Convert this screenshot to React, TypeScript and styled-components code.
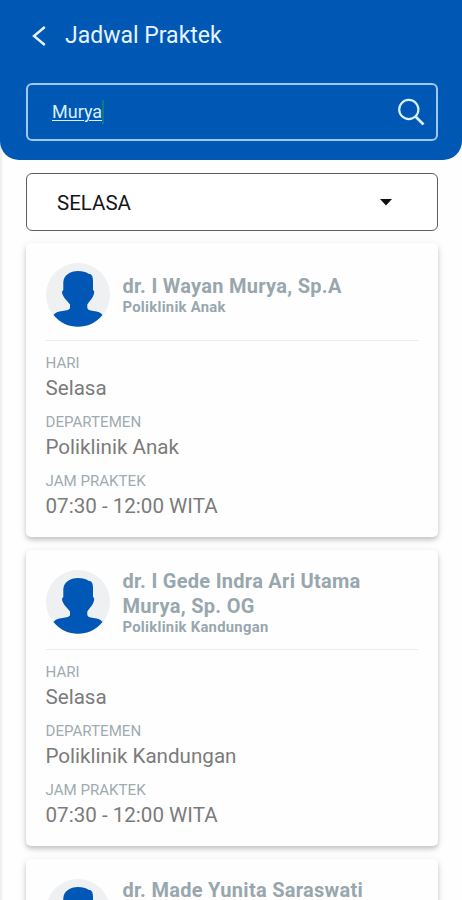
import React from 'react';
import styled, { createGlobalStyle } from 'styled-components';

const GlobalStyle = createGlobalStyle`
  * { box-sizing: border-box; }
  body {
    margin: 0;
    background: #fefefe;
    font-family: Roboto, "Liberation Sans", sans-serif;
  }
`;

const Screen = styled.div`
  width: 100%;
  height: 900px;
  overflow: hidden;
  background: linear-gradient(to right, #ececec 0, #f3f3f3 2px, #fefefe 3px);
`;

const Header = styled.header`
  height: 160px;
  padding: 0 24px 0 26px;
  background: #0058b4;
  border-radius: 0 0 19px 19px;
`;

const TitleBar = styled.div`
  display: flex;
  align-items: center;
  gap: 18px;
  height: 83px;
  padding: 0 0 12px 6px;
`;

const Title = styled.h1`
  margin: 0;
  color: #e6f4ff;
  font-size: 23px;
  font-weight: 400;
  line-height: 28px;
`;

const SearchBox = styled.div`
  display: flex;
  align-items: center;
  justify-content: space-between;
  height: 58px;
  padding: 0 11px 0 24px;
  border: 2px solid #9ccaf0;
  border-radius: 6px;
`;

const Query = styled.span`
  display: flex;
  align-items: center;
  color: #d8efff;
  font-size: 18px;
  line-height: 24px;
  text-decoration: underline;
  text-decoration-thickness: 1px;
  text-underline-offset: 2px;
`;

const Caret = styled.i`
  width: 2px;
  height: 24px;
  background: #087c83;
`;

const DaySelect = styled.div`
  display: flex;
  align-items: center;
  justify-content: space-between;
  height: 58px;
  margin: 13px 24px 12px 26px;
  padding: 1px 45px 0 30px;
  border: 1.5px solid #5d5d5d;
  border-radius: 6px;
  background: #fff;
  color: #161616;
  font-size: 20.5px;
`;

const List = styled.main`
  display: flex;
  flex-direction: column;
  gap: 13px;
  padding: 0 24px 0 26px;
`;

const Card = styled.article`
  padding: 20px 20px 0 19.5px;
  background: #fefefe;
  border-radius: 5px;
  box-shadow: 0 3px 4px rgba(0, 0, 0, 0.16), 0 2px 9px rgba(0, 0, 0, 0.1);
`;

const Doctor = styled.div`
  display: flex;
  gap: 13px;
  padding-bottom: 13px;
  border-bottom: 1px solid #ebebeb;
`;

const DoctorText = styled.div`
  display: flex;
  flex-direction: column;
  justify-content: center;
  margin-top: -1px;
  padding-bottom: 1px;
`;

const Name = styled.h2`
  margin: 0;
  color: #98a7ad;
  font-size: 20px;
  font-weight: 700;
  letter-spacing: 0.28px;
  line-height: 25px;
  white-space: pre-line;
`;

const Clinic = styled.div`
  color: #98a7ad;
  font-size: 14.8px;
  font-weight: 700;
  letter-spacing: 0.28px;
  line-height: 16px;
`;

const Details = styled.dl`
  margin: 0;
  padding: 13px 0 6px;
`;

const Detail = styled.div`
  height: 59px;
`;

const Label = styled.dt`
  color: #9eabaf;
  font-size: 15.1px;
  line-height: 18px;
`;

const Value = styled.dd`
  margin: 0;
  color: #7b7b7b;
  font-size: 20.6px;
  line-height: 32px;
`;

const AvatarSvg = styled.svg`
  display: block;
  flex: none;
`;

const Avatar = () => (
  <AvatarSvg width="64" height="64" viewBox="0 0 64 64">
    <circle cx="32" cy="32" r="32" fill="#eff0f1" />
    <path
      fill="#0057b5"
      d="M32 8C36.500 8 40 9 42.500 10.800C46 11 47 13.500 47 18V27C48.600 27.500 48.400 30 47.600 32C46.500 35.500 43.500 38 41.300 41.500V44.700C41.500 46.800 43.500 47.500 47.500 48C52 48.500 55 49.800 56.500 52C50 60 41 63.800 32 63.800S14 60 7.500 52C9 49.800 12 48.500 16.500 48C20.500 47.500 24 46.800 24 44.700V41.500C21.500 38 18 35.500 16.800 32C15.800 30 15.600 28 17.300 27V19C18 12 24 8 32 8Z"
    />
  </AvatarSvg>
);

const BackIcon = () => (
  <svg width="15" height="22" viewBox="0 0 15 22" fill="none" stroke="#e6f4ff" strokeWidth="2.4">
    <path d="M12.800 2L2 11L12.800 20" />
  </svg>
);

const SearchIcon = () => (
  <svg width="28" height="28" viewBox="0 0 28 28" fill="none" stroke="#d8efff" strokeWidth="2.200">
    <circle cx="11.800" cy="11.500" r="9.600" />
    <path d="M18.500 18.500L26.500 26.500" strokeWidth="2.700" />
  </svg>
);

const doctors = [
  { name: 'dr. I Wayan Murya, Sp.A', clinic: 'Poliklinik Anak' },
  { name: 'dr. I Gede Indra Ari Utama\nMurya, Sp. OG', clinic: 'Poliklinik Kandungan' },
  { name: 'dr. Made Yunita Saraswati\nMurya, Sp. OG', clinic: 'Poliklinik Kandungan' },
];

export default function App() {
  return (
    <>
      <GlobalStyle />
      <Screen>
        <Header>
          <TitleBar>
            <BackIcon />
            <Title>Jadwal Praktek</Title>
          </TitleBar>
          <SearchBox>
            <Query>
              Murya
              <Caret />
            </Query>
            <SearchIcon />
          </SearchBox>
        </Header>
        <DaySelect>
          SELASA
          <svg width="12" height="7" viewBox="0 0 12 7">
            <path d="M0 0H12L6 6.500Z" fill="#111" />
          </svg>
        </DaySelect>
        <List>
          {doctors.map((doctor) => (
            <Card key={doctor.name}>
              <Doctor>
                <Avatar />
                <DoctorText>
                  <Name>{doctor.name}</Name>
                  <Clinic>{doctor.clinic}</Clinic>
                </DoctorText>
              </Doctor>
              <Details>
                <Detail>
                  <Label>HARI</Label>
                  <Value>Selasa</Value>
                </Detail>
                <Detail>
                  <Label>DEPARTEMEN</Label>
                  <Value>{doctor.clinic}</Value>
                </Detail>
                <Detail>
                  <Label>JAM PRAKTEK</Label>
                  <Value>07:30 - 12:00 WITA</Value>
                </Detail>
              </Details>
            </Card>
          ))}
        </List>
      </Screen>
    </>
  );
}
